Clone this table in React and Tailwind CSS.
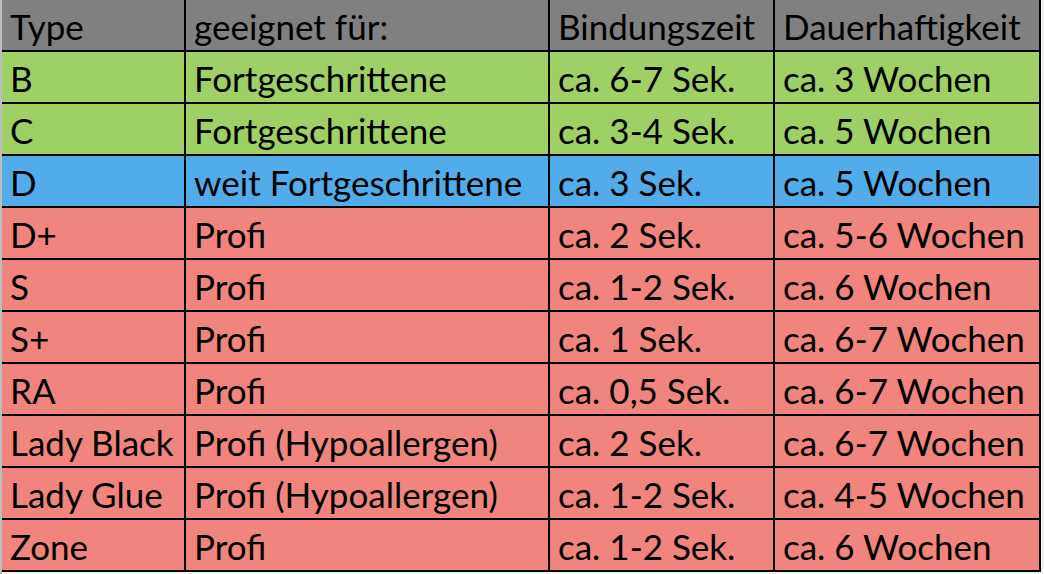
const header = ['Type', 'geeignet für:', 'Bindungszeit', 'Dauerhaftigkeit'];

const rows = [
  { c: 'bg-[#9ed066]', cells: ['B', 'Fortgeschrittene', 'ca. 6-7 Sek.', 'ca. 3 Wochen'] },
  { c: 'bg-[#9ed066]', cells: ['C', 'Fortgeschrittene', 'ca. 3-4 Sek.', 'ca. 5 Wochen'] },
  { c: 'bg-[#52ace9]', cells: ['D', 'weit Fortgeschrittene', 'ca. 3 Sek.', 'ca. 5 Wochen'] },
  { c: 'bg-[#ef857c]', cells: ['D+', 'Profi', 'ca. 2 Sek.', 'ca. 5-6 Wochen'] },
  { c: 'bg-[#ef857c]', cells: ['S', 'Profi', 'ca. 1-2 Sek.', 'ca. 6 Wochen'] },
  { c: 'bg-[#ef857c]', cells: ['S+', 'Profi', 'ca. 1 Sek.', 'ca. 6-7 Wochen'] },
  { c: 'bg-[#ef857c]', cells: ['RA', 'Profi', 'ca. 0,5 Sek.', 'ca. 6-7 Wochen'] },
  { c: 'bg-[#ef857c]', cells: ['Lady Black', 'Profi (Hypoallergen)', 'ca. 2 Sek.', 'ca. 6-7 Wochen'] },
  { c: 'bg-[#ef857c]', cells: ['Lady Glue', 'Profi (Hypoallergen)', 'ca. 1-2 Sek.', 'ca. 4-5 Wochen'] },
  { c: 'bg-[#ef857c]', cells: ['Zone', 'Profi', 'ca. 1-2 Sek.', 'ca. 6 Wochen'] },
];

function Cell({ children, bg }) {
  return (
    <div className={`${bg} h-[50px] pl-[8px] leading-[53px] whitespace-nowrap overflow-hidden`}>
      {children}
    </div>
  );
}

export default function App() {
  return (
    <div className="w-[1044px] h-[574px] bg-[#f2f2f2] flex">
      <div className="w-[2px] bg-[#bdbdbd]" />
      <div
        className="grid grid-cols-[182px_362px_223px_264px] gap-[2px] pr-[2px] pb-[2px] bg-black h-[572px] text-[35px] text-black"
        style={{ fontFamily: 'Lato, "Liberation Sans", sans-serif' }}
      >
        {header.map((h) => (
          <Cell key={h} bg="bg-[#808080]">{h}</Cell>
        ))}
        {rows.map((r) =>
          r.cells.map((t, i) => (
            <Cell key={r.cells[0] + i} bg={r.c}>{t}</Cell>
          ))
        )}
      </div>
    </div>
  );
}
